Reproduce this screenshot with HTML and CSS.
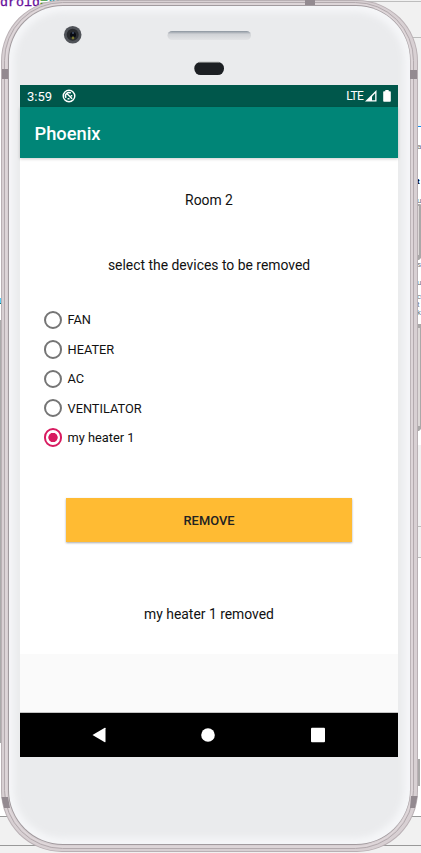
FILE: index.html
```html
<!DOCTYPE html>
<html lang="en">
<head>
<meta charset="utf-8">
<title>Phoenix</title>
<link rel="stylesheet" href="styles.css">
</head>
<body>
<div class="code-line"><span>droid</span><b>=</b><i>"u</i></div>
<svg class="desktop" width="421" height="853" viewBox="0 0 421 853">
  <path fill="#f1f1f1" d="M330 0h91v126h-91zM418 445h3v112h-3zM0 817h421v36H0z"/>
  <path fill="#bdbdbd" d="M350 1h71v1h-71zM400 37h21v1h-21zM418 526h3v1h-3zM418 557h3v1h-3z"/>
  <path fill="#999" d="M0 816h421v1H0zM0 845h421v1H0z"/>
  <path fill="#168bef" d="M417 126h4v1h-4z"/>
  <path fill="#55cdf5" d="M0 298h2v5H0z"/><path fill="#187878" d="M0 303h2v1H0z"/><path fill="#aaa" d="M0 320h2v423H0z"/>
  <path fill="#aaa8a8" d="M417 204h3q1 0 1 1v53l-2 2h-2zM417 324h4v105l-2 2h-2zM417 759h3v27h-3z"/>
  <path fill="#ddd9d8" d="M418 206h1v49h-1zM418 328h2v98h-2z"/>
</svg>
<div class="edge-text"><span class="t1">a</span><span class="t2">t</span><span class="t3">u</span><span class="t4">s</span><span class="t5">u</span><span class="t6">c</span><span class="t7">t</span><span class="t8">k</span></div>
<main class="phone">
  <svg class="shell" width="421" height="853" viewBox="0 0 421 853">
    <defs>
      <linearGradient id="lens" x2="0" y2="1"><stop stop-color="#8b949e"/><stop offset=".35" stop-color="#d0d2d6"/><stop offset="1" stop-color="#e2e3e5"/></linearGradient>
      <filter id="soft" x="-10%" y="-10%" width="120%" height="120%"><feGaussianBlur stdDeviation="3"/></filter>
      <clipPath id="face"><rect x="9" y="6" width="401" height="838" rx="54"/></clipPath>
    </defs>
    <rect x="1" y="0" width="417" height="852" rx="61" fill="#b9b0b4"/>
    <rect x="2" y="1" width="415" height="850" rx="60" fill="#d8d0d3"/>
    <rect x="4.5" y="2.5" width="409" height="846" rx="58" fill="none" stroke="#b3aaae"/>
    <rect x="6" y="4" width="406" height="843" rx="57" fill="none" stroke="#e2dadd"/>
    <rect x="8" y="5" width="402.5" height="840" rx="55" fill="#a19a9e"/>
    <g clip-path="url(#face)">
      <rect x="9" y="6" width="401" height="838" fill="#f5f6f8"/>
      <rect x="14" y="12" width="390" height="826" rx="50" fill="#eaebed" filter="url(#soft)"/>
    </g>
    <path fill="#938a90" d="M305 0h10v5h-10zM2 69h6v10H2zM410 70h7v9h-7zM1.5 797H8l2 11H4zM411 796h6.5L415 808h-5z"/>
    <circle cx="72.7" cy="34.7" r="8.8" fill="#505359"/><circle cx="72.7" cy="34.7" r="6" fill="#292b2f"/><circle cx="73" cy="35" r="3" fill="#090b13"/><circle cx="73" cy="38" r="1.4" fill="#77762c"/><circle cx="73" cy="33" r="1" fill="#45526b"/>
    <rect x="167.5" y="31" width="83.5" height="9" rx="4.5" fill="url(#lens)"/>
    <rect x="194.3" y="62" width="29.7" height="13" rx="6.3" fill="#1c1f23"/><path d="M199 62.3h20" stroke="#858888"/>
  </svg>
  <section class="screen">
    <header class="status">
      <span class="time">3:59</span>
      <svg class="app-mark" width="14" height="14" viewBox="0 0 14 14"><circle cx="7" cy="7" r="5.8" fill="none" stroke="#fff" stroke-width="1.4"/><path d="M4 8.8A3.5 3.5 0 0 1 8.8 4M5.1 4.7l5 5M5.5 9.8h2M9.5 6v1.6" fill="none" stroke="#fff" stroke-width="1.5"/></svg>
      <span class="lte">LTE</span>
      <svg class="signal" width="12" height="12" viewBox="0 0 12 12"><path d="M0 11.5 11.5 0v11.5z" fill="#fff"/><path d="M7 6.5 10.2 3.3v7H7z" fill="#00574b"/></svg>
      <svg class="battery" width="8" height="12" viewBox="0 0 8 12"><path d="M2.3 0h3.4v1.3H7q.8 0 .8.8v8.8q0 .8-.8.8H1q-.8 0-.8-.8V2.1q0-.8.8-.8h1.3z" fill="#fff"/></svg>
    </header>
    <h1 class="appbar">Phoenix</h1>
    <div class="content">
      <p class="room">Room 2</p>
      <p class="prompt">select the devices to be removed</p>
      <div class="devices">
        <label><span class="radio"></span>FAN</label>
        <label><span class="radio"></span>HEATER</label>
        <label><span class="radio"></span>AC</label>
        <label><span class="radio"></span>VENTILATOR</label>
        <label><span class="radio checked"></span>my heater 1</label>
      </div>
      <button class="remove">REMOVE</button>
      <p class="result">my heater 1 removed</p>
    </div>
    <div class="blank"></div>
    <nav class="nav">
      <svg width="16" height="16" viewBox="0 0 16 16"><path d="M1.5 8 13.8.8q.7-.3.7.4v13.6q0 .7-.7.4z" fill="#fff"/></svg>
      <svg width="16" height="16" viewBox="0 0 16 16"><circle cx="8" cy="8" r="6.8" fill="#fff"/></svg>
      <svg width="16" height="16" viewBox="0 0 16 16"><rect x="1" y=".7" width="14" height="14.6" rx="1" fill="#fff"/></svg>
    </nav>
  </section>
</main>
</body>
</html>
```
FILE: styles.css
```css
* { box-sizing: border-box; }
body { margin: 0; width: 421px; height: 853px; overflow: hidden; background: #fff; position: relative; font-family: Roboto, sans-serif; color: #111; }
.code-line { position: absolute; left: 0; top: -5px; font: 13.33px/15px "Liberation Mono", monospace; color: #660e9a; -webkit-text-stroke: .3px; }
.code-line b { color: #008000; }
.code-line i { color: #12949c; font-style: normal; font-weight: bold; }
.desktop, .shell { position: absolute; left: 0; top: 0; }
.edge-text { position: absolute; left: 417px; top: 0; width: 8px; font-size: 8px; line-height: 7px; color: #777; }
.edge-text span { position: absolute; left: 0; }
.t1 { top: 143px; }
.t2 { top: 178px; font-weight: bold; color: #000; }
.t3 { top: 197px; }
.t4 { top: 261px; }
.t5 { top: 279px; }
.t6 { top: 293px; }
.t7 { top: 301px; }
.t8 { top: 309px; }
.phone { position: relative; width: 421px; height: 853px; padding: 85px 23px 96px 20px; }
.screen { position: relative; width: 378px; height: 672px; display: flex; flex-direction: column; background: #fff; }
.status { height: 22px; flex: none; background: #00574b; color: #fff; display: flex; align-items: center; padding: 0 7px; font-size: 13px; }
.time { width: 35px; font-size: 13px; }
.lte { margin-left: auto; font-size: 12px; letter-spacing: -.7px; margin-right: 2px; }
.signal { margin-right: 6px; }
.appbar { height: 51px; flex: none; margin: 0; padding-left: 14.5px; background: #008577; color: #fff; font-size: 18.3px; font-weight: 500; line-height: 53px; box-shadow: 0 1px 3px #0003; }
.content { height: 496px; display: flex; flex-direction: column; align-items: center; }
p { margin: 0; font-size: 13.9px; line-height: 20px; white-space: nowrap; }
.room { margin-top: 32px; }
.prompt { margin-top: 45px; }
.devices { align-self: stretch; margin: 30.3px 0 0 23.5px; }
.devices label { display: flex; align-items: center; height: 29.4px; font-size: 12.8px; }
.radio { width: 18.5px; height: 18.5px; margin-right: 5.5px; border: 2px solid #757575; border-radius: 50%; }
.checked { border-color: #d81b60; background: radial-gradient(circle, #d81b60 0 4.3px, transparent 5px); }
.remove { width: 286px; height: 44px; flex: none; margin-top: 45.7px; border: 0; background: #ffbb33; color: #222; font: 500 12.9px Roboto, sans-serif; box-shadow: 0 1px 2px #0005; padding: 1px 0 0; }
.result { margin-top: 62px; }
.blank { flex: 1; background: #fafafa; border-bottom: 1px solid #c4c4c4; }
.nav { height: 44px; flex: none; background: #000; display: flex; justify-content: space-between; align-items: center; padding: 0 72.5px 0 71px; }
```
